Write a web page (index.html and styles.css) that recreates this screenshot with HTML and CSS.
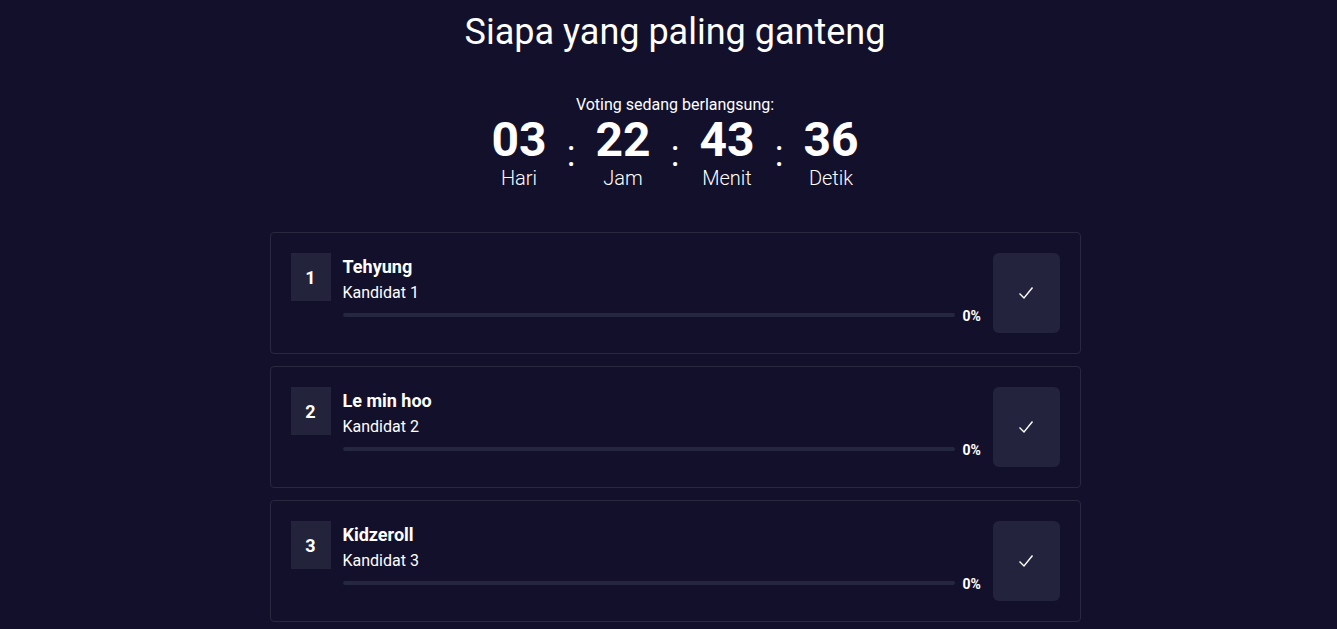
FILE: index.html
```html
<!DOCTYPE html>
<html lang="id">
<head>
<meta charset="utf-8">
<title>Voting</title>
<link rel="stylesheet" href="styles.css">
</head>
<body>
<main class="page">
  <h1 class="title">Siapa yang paling ganteng</h1>
  <section class="countdown">
    <div class="status">Voting sedang berlangsung:</div>
    <div class="timer">
      <div class="unit"><div class="num">03</div><div class="lbl">Hari</div></div>
      <div class="colon">:</div>
      <div class="unit"><div class="num">22</div><div class="lbl">Jam</div></div>
      <div class="colon">:</div>
      <div class="unit"><div class="num">43</div><div class="lbl">Menit</div></div>
      <div class="colon">:</div>
      <div class="unit"><div class="num">36</div><div class="lbl">Detik</div></div>
    </div>
  </section>
  <section class="list">
    <div class="card">
      <div class="rank">1</div>
      <div class="info">
        <div class="name">Tehyung</div>
        <div class="sub">Kandidat 1</div>
        <div class="progress"><div class="track"><div class="fill" style="width:0%"></div></div><span class="pct">0%</span></div>
      </div>
      <button class="vote"><svg width="16" height="14" viewBox="0 0 16 14"><path d="M1.5 7.5 L6 12 L14.5 1.5" fill="none" stroke="#fff" stroke-width="1.4"/></svg></button>
    </div>
    <div class="card">
      <div class="rank">2</div>
      <div class="info">
        <div class="name">Le min hoo</div>
        <div class="sub">Kandidat 2</div>
        <div class="progress"><div class="track"><div class="fill" style="width:0%"></div></div><span class="pct">0%</span></div>
      </div>
      <button class="vote"><svg width="16" height="14" viewBox="0 0 16 14"><path d="M1.5 7.5 L6 12 L14.5 1.5" fill="none" stroke="#fff" stroke-width="1.4"/></svg></button>
    </div>
    <div class="card">
      <div class="rank">3</div>
      <div class="info">
        <div class="name">Kidzeroll</div>
        <div class="sub">Kandidat 3</div>
        <div class="progress"><div class="track"><div class="fill" style="width:0%"></div></div><span class="pct">0%</span></div>
      </div>
      <button class="vote"><svg width="16" height="14" viewBox="0 0 16 14"><path d="M1.5 7.5 L6 12 L14.5 1.5" fill="none" stroke="#fff" stroke-width="1.4"/></svg></button>
    </div>
  </section>
</main>
</body>
</html>
```
FILE: styles.css
```css
* { box-sizing: border-box; }
html, body { margin: 0; padding: 0; }
body {
  background: #13102c;
  color: #fff;
  font-family: Roboto, "Liberation Sans", sans-serif;
  overflow: hidden;
}
.page {
  display: flex;
  flex-direction: column;
  align-items: center;
  padding-top: 10px;
  padding-left: 13px;
}
.title {
  margin: 0;
  font-size: 36px;
  font-weight: 400;
  line-height: 44px;
}
.countdown {
  margin-top: 41px;
  display: flex;
  flex-direction: column;
  align-items: center;
}
.status {
  font-size: 16px;
  line-height: 20px;
}
.timer {
  display: flex;
  align-items: flex-start;
  margin-top: -3px;
}
.unit {
  width: 64px;
  display: flex;
  flex-direction: column;
  align-items: center;
}
.num {
  font-size: 48px;
  font-weight: 700;
  line-height: 56px;
}
.lbl {
  font-size: 20px;
  font-weight: 300;
  line-height: 20px;
  margin-top: 0;
}
.colon {
  width: 40px;
  text-align: center;
  font-size: 36px;
  line-height: 36px;
  padding-top: 24px;
}
.list {
  margin-top: 44px;
  width: 811px;
  display: flex;
  flex-direction: column;
  gap: 12px;
}
.card {
  display: flex;
  align-items: flex-start;
  gap: 12px;
  padding: 20px;
  border: 1px solid #29283f;
  border-radius: 4px;
  height: 122px;
}
.rank {
  width: 40px;
  height: 48px;
  background: #23233c;
  display: flex;
  align-items: center;
  justify-content: center;
  font-size: 18px;
  font-weight: 700;
}
.info {
  flex: 1;
  display: flex;
  flex-direction: column;
  padding-top: 3px;
}
.name {
  font-size: 18px;
  font-weight: 700;
  line-height: 22px;
}
.sub {
  font-size: 16px;
  line-height: 20px;
  margin-top: 5px;
}
.progress {
  display: flex;
  align-items: center;
  gap: 8px;
  margin-top: 2px;
}
.track {
  flex: 1;
  height: 4px;
  border-radius: 2px;
  background: #252640;
  overflow: hidden;
}
.fill { height: 100%; background: #4f46e5; }
.pct {
  font-size: 14px;
  font-weight: 700;
  line-height: 18px;
  width: 18px;
  padding-top: 2px;
}
.vote {
  width: 67px;
  height: 80px;
  border: none;
  border-radius: 6px;
  background: #23233d;
  display: flex;
  align-items: center;
  justify-content: center;
  padding: 0;
  cursor: pointer;
}
```
